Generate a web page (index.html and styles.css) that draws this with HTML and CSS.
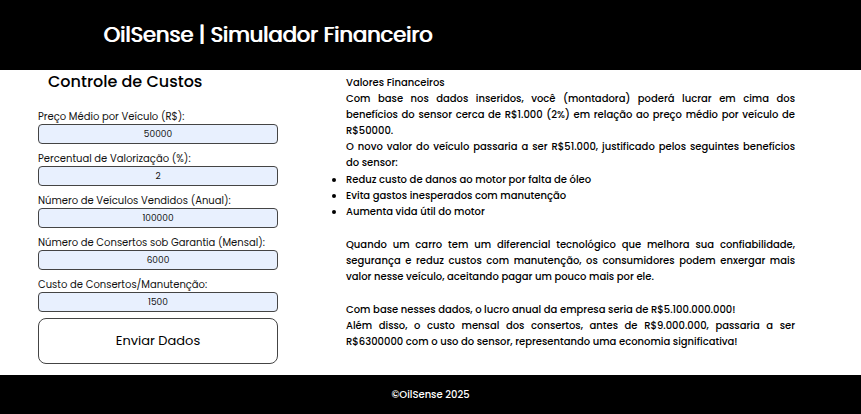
FILE: index.html
```html
<!DOCTYPE html>
<html lang="pt-BR">
<head>
<meta charset="utf-8">
<meta name="viewport" content="width=device-width, initial-scale=1">
<title>OilSense | Simulador Financeiro</title>
<link rel="stylesheet" href="styles.css">
</head>
<body>
<header class="header">
  <h1 class="title">OilSense | Simulador Financeiro</h1>
</header>
<main class="main">
  <section class="costs">
    <h2 class="subtitle">Controle de Custos</h2>
    <form class="form">
      <label class="label" for="preco">Preço Médio por Veículo (R$):</label>
      <input class="input" id="preco" type="text" value="50000">
      <label class="label" for="valorizacao">Percentual de Valorização (%):</label>
      <input class="input" id="valorizacao" type="text" value="2">
      <label class="label" for="vendidos">Número de Veículos Vendidos (Anual):</label>
      <input class="input" id="vendidos" type="text" value="100000">
      <label class="label" for="consertos">Número de Consertos sob Garantia (Mensal):</label>
      <input class="input" id="consertos" type="text" value="6000">
      <label class="label" for="custo">Custo de Consertos/Manutenção:</label>
      <input class="input" id="custo" type="text" value="1500">
      <button class="submit" type="button">Enviar Dados</button>
    </form>
  </section>
  <section class="results">
    <h3 class="results-title">Valores Financeiros</h3>
    <p>Com base nos dados inseridos, você (montadora) poderá lucrar em cima dos benefícios do sensor cerca de R$1.000 (2%) em relação ao preço médio por veículo de R$50000.</p>
    <p>O novo valor do veículo passaria a ser R$51.000, justificado pelos seguintes benefícios do&nbsp;sensor:</p>
    <ul class="benefits">
      <li>Reduz custo de danos ao motor por falta de óleo</li>
      <li>Evita gastos inesperados com manutenção</li>
      <li>Aumenta vida útil do motor</li>
    </ul>
    <p class="spaced">Quando um carro tem um diferencial tecnológico que melhora sua confiabilidade, segurança e reduz custos com manutenção, os consumidores podem enxergar mais valor nesse veículo, aceitando pagar um pouco mais por ele.</p>
    <p>Com base nesses dados, o lucro anual da empresa seria de R$5.100.000.000!</p>
    <p>Além disso, o custo mensal dos consertos, antes de R$9.000.000, passaria a ser R$6300000 com o uso do sensor, representando uma economia significativa!</p>
  </section>
</main>
<footer class="footer">©OilSense 2025</footer>
</body>
</html>
```

FILE: styles.css
```css
* {
  box-sizing: border-box;
  margin: 0;
  padding: 0;
}

body {
  display: flex;
  flex-direction: column;
  min-height: 100vh;
  background: #fff;
  color: #000;
  font-family: Poppins, Inter, "Liberation Sans", sans-serif;
  font-size: 10px;
  line-height: 16px;
}

.header {
  padding: 18px 12%;
  background: #000;
  color: #fff;
}

.title {
  font-size: 21px;
  font-weight: 400;
  line-height: 34px;
  text-shadow: 1px 0 0 currentColor;
}

.main {
  flex: 1;
  display: grid;
  grid-template-columns: 240fr 449fr;
  gap: 68px;
  padding: 0 66px 0 38px;
}

.subtitle {
  margin-bottom: 20px;
  padding: 0 10px;
  font-size: 16px;
  font-weight: 500;
  line-height: 24px;
}

.form {
  display: flex;
  flex-direction: column;
  padding-bottom: 11px;
}

.label {
  margin-top: 8px;
  line-height: 14px;
}

.form .label:first-child {
  margin-top: -4px;
}

.label,
.input {
  color: #111;
}

.input {
  width: 100%;
  height: 20px;
  border: 1px solid #444;
  border-radius: 4px;
  background: #e8f0fe;
  font-family: inherit;
  font-size: 9px;
  text-align: center;
}

.submit {
  height: 46px;
  margin-top: 6px;
  border: 1px solid #444;
  border-radius: 8px;
  background: #fff;
  color: #000;
  font-family: inherit;
  font-size: 13px;
}

.results {
  padding-top: 5px;
  font-weight: 500;
  text-align: justify;
}

.results-title {
  font-size: 10px;
  font-weight: 500;
}

.benefits {
  margin-top: 1px;
}

.spaced {
  margin: 17px 0;
}

.footer {
  padding: 12px 0 11px;
  background: #000;
  color: #fff;
  font-weight: 500;
  text-align: center;
}
```
